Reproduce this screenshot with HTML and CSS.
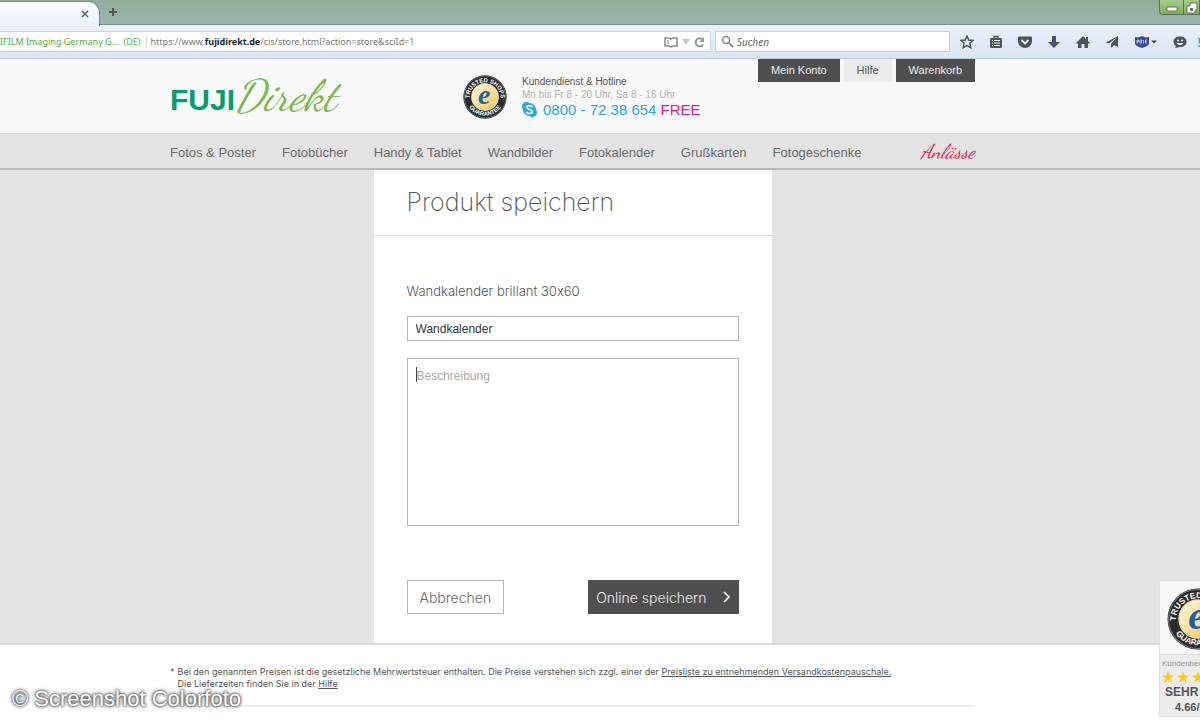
FILE: index.html
```html
<!DOCTYPE html>
<html lang="de">
<head>
  <meta charset="UTF-8">
  <meta name="viewport" content="width=device-width, initial-scale=1.0">
  <title>FUJIDirekt - Produkt speichern</title>
  <link rel="stylesheet" href="styles.css">
</head>
<body>
  <div class="browser">
    <div class="tab-strip">
      <div class="tab"><button class="tab-btn" aria-label="Tab schließen"><svg width="8" height="8" viewBox="0 0 8 8"><path d="M1 1l6 6M7 1L1 7" stroke="#5b6470" stroke-width="1.5"/></svg></button></div>
      <button class="tab-btn new-tab" aria-label="Neuer Tab"><svg width="10" height="10" viewBox="0 0 10 10"><path d="M5 1v8M1 5h8" stroke="#4b5a58" stroke-width="2"/></svg></button>
      <div class="window-buttons">
        <button aria-label="Minimieren"><svg width="12" height="12" viewBox="0 0 12 12"><rect x="1" y="5" width="10" height="4" rx="1" fill="#fff" stroke="#60745c"/></svg></button>
        <button aria-label="Maximieren"><svg width="12" height="12" viewBox="0 0 12 12"><path d="M4 1h7v7H9v3H1V4h3z" fill="#fff" stroke="#60745c"/><path d="M4 6h3v3H4z" fill="#60745c"/></svg></button>
      </div>
    </div>
    <div class="toolbar">
      <div class="url-field">
        <span class="identity">IFILM Imaging Germany G... &nbsp;(DE)</span>
        <div class="url" role="textbox" contenteditable="true" spellcheck="false" aria-label="Adresse">https://www.<b>fujidirekt.de</b>/cis/store.html?action=store&amp;sciId=1</div>
        <svg width="14" height="12" viewBox="0 0 14 12" fill="none" stroke="#878b90" stroke-width="1.5"><path d="M1 2h4.500l1.500 1 1.500-1H13v8H8.500L7 11l-1.500-1H1z"/><path d="M3 5h2M3 7h2" stroke-width="1"/></svg>
        <svg width="8" height="8" viewBox="0 0 8 8"><path d="M0 1h8L4 7z" fill="#b9cad6"/></svg>
        <svg width="11" height="12" viewBox="0 0 11 12"><path d="M9 8.500A4 4 0 1 1 8 3" fill="none" stroke="#8798a6" stroke-width="2"/><path d="M10 1v5H5z" fill="#8798a6"/></svg>
      </div>
      <label class="search-field">
        <svg width="13" height="13" viewBox="0 0 13 13" fill="none" stroke="#85898d"><circle cx="5" cy="5" r="3.500" stroke-width="1.500"/><path d="M8 8l4 4" stroke-width="2"/></svg>
        <input type="text" placeholder="Suchen" aria-label="Suchen">
      </label>
      <div class="tools">
        <button aria-label="Lesezeichen"><svg width="14" height="14" viewBox="0 0 14 14"><path d="M7 1l1.800 4 4.200.5-3.200 2.800 1 4.400L7 10.500l-3.800 2.200 1-4.400L1 5.500 5.200 5z" fill="none" stroke="#4d535a" stroke-width="1.500"/></svg></button>
        <button aria-label="Lesezeichen anzeigen"><svg width="14" height="14" viewBox="0 0 14 14"><path d="M5 3V1.500h4V3" fill="none" stroke="#4d535a" stroke-width="1.500"/><rect x="1" y="3" width="12" height="10" rx="1.500" fill="#4d535a"/><path d="M3 5.500h1M5 5.500h6M3 8h1M5 8h6M3 10.500h1M5 10.500h6" stroke="#eef4fa"/></svg></button>
        <button aria-label="Pocket"><svg width="14" height="14" viewBox="0 0 14 14"><path d="M1 1.500h12a1 1 0 0 1 1 1V6a7 7 0 0 1-14 0V2.500a1 1 0 0 1 1-1z" fill="#4d535a"/><path d="M3.500 5L7 8.500 10.500 5" fill="none" stroke="#eef4fa" stroke-width="1.800"/></svg></button>
        <button aria-label="Downloads"><svg width="14" height="14" viewBox="0 0 14 14"><path d="M5 1h4v6h4l-6 6-6-6h4z" fill="#4d535a"/></svg></button>
        <button aria-label="Startseite"><svg width="14" height="14" viewBox="0 0 14 14"><path d="M7 1l3 3V2h2v4l2 2-1 1-1-1v5H8.500V9h-3v4H2V8L1 9 0 8z" fill="#4d535a"/></svg></button>
        <button aria-label="Senden"><svg width="14" height="14" viewBox="0 0 14 14"><path d="M13 1v11L9 10l-3 3V9l6-7-8 6.500L1 7.500z" fill="#4d535a"/></svg></button>
        <button class="shield" aria-label="Schutz"><svg width="24" height="14" viewBox="0 0 24 14"><path d="M1 2l3 .5L8 1l4 1.500 3-.5v7c-1 2-4 3-7 4-3-1-6-2-7-4z" fill="#3c4c9c"/><path d="M3 8.500V5h1.500v2H3M6 5v3.200h1.500V5zM9.500 8.500V5M13 5h-1.500v3H13M11.500 6.500h1" fill="none" stroke="#d7dcf2" stroke-width=".8"/><path d="M17 5.500h6l-3 3z" fill="#444"/></svg></button>
        <button aria-label="Chat"><svg width="14" height="14" viewBox="0 0 14 14"><path d="M7 1.500c4 0 6.500 2 6.500 5.200S11 12 7 12l-5 1 1-2C1.500 10 .5 8.500.5 6.700.5 3.500 3 1.500 7 1.500z" fill="#4d535a"/><circle cx="5" cy="5.500" r="1" fill="#eef4fa"/><circle cx="9" cy="5.500" r="1" fill="#eef4fa"/><path d="M3.500 8h7c-1 2.500-6 2.500-7 0z" fill="#eef4fa"/></svg></button>
        <button class="twitter" aria-label="Twitter"><svg width="14" height="14" viewBox="0 0 14 14"><path d="M1 2l5 3c0-3 3-4 5-2l3-1-2 4c0 6-7 8-12 5l4-1-3-3 1-1z" fill="#2ca7e0"/></svg></button>
      </div>
    </div>
  </div>

  <header class="header">
    <div class="wrap header-row">
      <a class="logo" href="#">FUJI<span>Direkt</span></a>
      <div class="service">
        <svg class="seal" viewBox="0 0 60 60" role="img" aria-label="Trusted Shops">
          <defs>
            <path id="arc-top" d="M9 36A21.500 21.500 0 1 1 51 36"/>
            <path id="arc-bottom" d="M4 34A26.500 26.500 0 0 0 56 34"/>
            <linearGradient id="gold" x1="0" y1="0" x2="1" y2="1"><stop offset="0" stop-color="#fffbe0"/><stop offset="1" stop-color="#f0c653"/></linearGradient>
          </defs>
          <circle cx="30" cy="30" r="29.500" fill="#2b2b2b"/>
          <circle cx="30" cy="30" r="28.500" fill="none" stroke="#777"/>
          <circle cx="30" cy="30" r="18.500" fill="url(#gold)" stroke="#e3e3e3"/>
          <text class="seal-ring"><textPath href="#arc-top" startOffset="50%">TRUSTED SHOPS</textPath></text>
          <text class="seal-ring"><textPath href="#arc-bottom" startOffset="50%">GUARANTEE</textPath></text>
          <text class="seal-e" x="29" y="40">e</text>
        </svg>
        <div class="hotline">
          <p>Kundendienst &amp; Hotline</p>
          <p class="hours">Mo bis Fr 8 - 20 Uhr, Sa 8 - 16 Uhr</p>
          <p class="phone"><svg width="15" height="15" viewBox="0 0 15 15"><circle cx="4.500" cy="4.500" r="4.500" fill="#27a9e1"/><circle cx="10.500" cy="10.500" r="4.500" fill="#27a9e1"/><circle cx="7.500" cy="7.500" r="6.500" fill="#27a9e1"/><path d="M10.500 5C9 3 4.800 3.300 4.800 5.500s5.600 1.600 5.600 4-4.500 2.700-6 .5" fill="none" stroke="#fff" stroke-width="1.600"/></svg>0800 - 72 38 654 <span>FREE</span></p>
        </div>
      </div>
      <div class="account">
        <a class="dark" href="#">Mein Konto</a>
        <a href="#">Hilfe</a>
        <a class="dark" href="#">Warenkorb</a>
      </div>
    </div>
  </header>

  <nav class="nav">
    <div class="wrap nav-row">
      <a href="#">Fotos &amp; Poster</a>
      <a href="#">Fotobücher</a>
      <a href="#">Handy &amp; Tablet</a>
      <a href="#">Wandbilder</a>
      <a href="#">Fotokalender</a>
      <a href="#">Grußkarten</a>
      <a href="#">Fotogeschenke</a>
      <a class="occasions" href="#">Anlässe</a>
    </div>
  </nav>

  <main class="main">
    <form class="dialog">
      <h1>Produkt speichern</h1>
      <div class="dialog-body">
        <label for="name">Wandkalender brillant 30x60</label>
        <input type="text" id="name" value="Wandkalender">
        <div class="description">
          <textarea aria-label="Beschreibung" placeholder="Beschreibung"></textarea>
          <span class="caret"></span>
        </div>
        <div class="actions">
          <button type="button" class="cancel">Abbrechen</button>
          <button type="button" class="save">Online speichern <svg width="8" height="12" viewBox="0 0 8 12"><path d="M1 1l5 5-5 5" fill="none" stroke="#fff" stroke-width="1.500"/></svg></button>
        </div>
      </div>
    </form>
  </main>

  <footer class="footer">
    <div class="wrap note">
      <span>*</span>
      <p>Bei den genannten Preisen ist die gesetzliche Mehrwertsteuer enthalten. Die Preise verstehen sich zzgl. einer der <a href="#">Preisliste zu entnehmenden Versandkostenpauschale.</a><br>Die Lieferzeiten finden Sie in der <a href="#">Hilfe</a></p>
    </div>
  </footer>

  <div class="credit">© Screenshot Colorfoto</div>

  <!-- Trusted Shops badge, runs off the right edge -->
  <aside class="badge">
    <div class="badge-inner">
      <svg class="seal" viewBox="0 0 60 60" role="img" aria-label="Trusted Shops">
        <circle cx="30" cy="30" r="29.500" fill="#2b2b2b"/>
        <circle cx="30" cy="30" r="28.500" fill="none" stroke="#777"/>
        <circle cx="30" cy="30" r="18.500" fill="url(#gold)" stroke="#e3e3e3"/>
        <text class="seal-ring"><textPath href="#arc-top" startOffset="50%">TRUSTED SHOPS</textPath></text>
        <text class="seal-ring"><textPath href="#arc-bottom" startOffset="50%">GUARANTEE</textPath></text>
        <text class="seal-e" x="29" y="40">e</text>
      </svg>
      <div class="rating">
        <p class="rating-title">Kundenbewertung</p>
        <p class="stars"><span>★</span><span>★</span><span>★</span><span>★</span><span>★</span></p>
        <p class="grade">SEHR GUT</p>
        <p class="score">4.66/5.00</p>
      </div>
    </div>
  </aside>
</body>
</html>
```

FILE: styles.css
```css
* {
  margin: 0;
  padding: 0;
  box-sizing: border-box;
}

body {
  position: relative;
  min-height: 100vh;
  overflow: hidden;
  background-color: #fff;
  color: #555;
  font-family: "Liberation Sans", Arial, sans-serif;
}

a {
  color: inherit;
  text-decoration: none;
}

button {
  font-family: inherit;
  cursor: pointer;
}

/* Browser bar */
.browser {
  font-family: "Noto Sans", sans-serif;
  font-size: 9px;
}

.tab-strip {
  display: flex;
  height: 25px;
  background: linear-gradient(#8fae98, #9bb6ae);
  border-bottom: 1px solid #71928a;
}

.tab {
  display: flex;
  align-items: center;
  justify-content: flex-end;
  width: 100px;
  height: 25px;
  margin-top: 1px;
  padding-right: 10px;
  background: linear-gradient(#fafcff, #eaf1fb);
  border-top: 1px solid #6f8f80;
  border-right: 1px solid #6f8f80;
  border-radius: 0 12px 0 0;
}

.tab-btn {
  display: flex;
  border: none;
  background: none;
}

.new-tab {
  align-self: center;
  margin-left: 8px;
}

.window-buttons {
  display: flex;
  height: 15px;
  margin-left: auto;
  border: 1px solid #58754f;
  border-top: none;
  border-radius: 0 0 0 4px;
  background: linear-gradient(#a5ca8e, #7caf5e);
}

.window-buttons button {
  width: 24px;
  border: none;
  border-right: 1px solid #58754f;
  background: none;
}

.window-buttons button + button {
  width: 15px;
  border-right: none;
}

.toolbar {
  display: flex;
  align-items: center;
  height: 34px;
  gap: 4px;
  background: linear-gradient(#eaf1fb, #d9e6f3);
  border-bottom: 1px solid #bccedd;
}

.url-field {
  display: flex;
  flex: 1;
  align-items: center;
  gap: 4px;
  height: 21px;
  padding-right: 5px;
  background-color: #fff;
  border: 1px solid #c3d5e5;
  border-left: none;
  white-space: nowrap;
}

.identity {
  padding-right: 5px;
  border-right: 1px solid #ddd;
  color: #4db14a;
}

.url {
  flex: 1;
  outline: none;
  color: #777;
}

.url b {
  color: #222;
}

.search-field {
  display: flex;
  align-items: center;
  gap: 3px;
  width: 235px;
  height: 21px;
  padding-left: 5px;
  background-color: #fff;
  border: 1px solid #c3d5e5;
}

.search-field input {
  flex: 1;
  border: none;
  outline: none;
  font: italic 10px "Noto Sans", sans-serif;
}

.search-field input::placeholder {
  color: #666;
}

.tools {
  display: flex;
  gap: 15px;
  width: 246px;
  padding-left: 6px;
}

.tools button {
  display: flex;
  flex: none;
  width: 14px;
  border: none;
  background: none;
}

.tools .shield {
  width: 24px;
}

.tools .twitter {
  margin-left: -5px;
}

.tools svg {
  flex: none;
}

/* Header */
.header,
.nav,
.main,
.footer {
  padding-right: 55px;
}

.wrap {
  max-width: 805px;
  margin: 0 auto;
}

.header {
  background-color: #f8f8f8;
}

.header-row {
  display: grid;
  grid-template-columns: 293px 1fr auto;
  height: 74px;
}

.logo {
  align-self: center;
  padding-top: 4px;
  color: #00a06a;
  font-size: 30px;
  font-weight: bold;
  line-height: 50px;
}

.logo span {
  color: #7cb84c;
  font-family: "Dancing Script", "Segoe Script", cursive;
  font-size: 44px;
  font-style: italic;
  font-weight: 300;
}

.service {
  display: flex;
  gap: 15px;
  padding-top: 16px;
}

.seal {
  flex: none;
  width: 44px;
  height: 44px;
}

.seal-ring {
  fill: #fff;
  font-size: 8px;
  font-weight: bold;
  text-anchor: middle;
}

.seal-e {
  fill: #1d5fa6;
  font-family: "Liberation Serif", serif;
  font-size: 38px;
  font-style: italic;
  font-weight: bold;
  text-anchor: middle;
}

.hotline {
  font-size: 10px;
  line-height: 13px;
  white-space: nowrap;
}

.hotline .hours {
  color: #b5b5b5;
}

.hotline .phone {
  color: #2da5dc;
  font-size: 15px;
  line-height: 18px;
}

.phone svg {
  margin-right: 6px;
  vertical-align: -2px;
}

.phone span {
  color: #e5178a;
}

.account {
  display: flex;
  align-items: flex-start;
  gap: 4px;
  font-size: 11px;
  line-height: 23px;
}

.account a {
  padding: 0 13px;
  background-color: #ececec;
}

.account .dark {
  background-color: #4f4f4f;
  color: #eee;
}

/* Navigation */
.nav {
  background-color: #e3e3e3;
  border-top: 1px solid #d8d8d8;
  border-bottom: 2px solid #b9b9b9;
}

.nav-row {
  display: flex;
  align-items: center;
  gap: 26px;
  height: 34px;
  padding-top: 2px;
  color: #6a6a6a;
  font-size: 13px;
  white-space: nowrap;
}

.nav-row .occasions {
  margin-left: auto;
  color: #e0234e;
  font-family: "Dancing Script", "Segoe Script", cursive;
  font-size: 20px;
  font-style: italic;
}

/* Save dialog */
.main {
  background-color: #e4e4e4;
  border-bottom: 2px solid #dadada;
}

.dialog {
  max-width: 398px;
  margin: 0 auto;
  background-color: #fff;
  font-family: Inter, sans-serif;
  font-variant-ligatures: no-contextual;
}

.dialog h1 {
  padding: 0 33px;
  border-bottom: 1px solid #dedede;
  font-size: 25px;
  font-weight: 200;
  line-height: 65px;
}

.dialog-body {
  padding: 45px 33px 29px;
}

.dialog label {
  display: block;
  margin-bottom: 15px;
  font-size: 13px;
  font-weight: 300;
  line-height: 20px;
}

.dialog input,
.dialog textarea {
  display: block;
  width: 100%;
  border: 1px solid #b4b4b4;
  outline: none;
  background-color: #fff;
  color: #333;
  font-family: "Liberation Sans", Arial, sans-serif;
  font-size: 12px;
}

.dialog input {
  height: 25px;
  padding: 1px 8px 0;
}

.description {
  position: relative;
  margin-top: 17px;
}

.dialog textarea {
  height: 168px;
  padding: 10px 9px;
  resize: none;
}

.dialog textarea::placeholder {
  color: #aaa;
}

.caret {
  position: absolute;
  top: 9px;
  left: 9px;
  width: 1px;
  height: 15px;
  background-color: #444;
}

.actions {
  display: flex;
  justify-content: space-between;
  margin-top: 54px;
}

.actions button {
  height: 34px;
  font-size: 14px;
  font-weight: 300;
}

.cancel {
  padding: 0 12px;
  border: 1px solid #b4b4b4;
  background-color: #fff;
  color: #666;
}

.save {
  display: flex;
  align-items: center;
  gap: 16px;
  padding: 0 8px;
  border: none;
  background-color: #4f4f4f;
  color: #eee;
}

/* Footer */
.note {
  display: flex;
  gap: 3px;
  padding: 21px 0 15px;
  border-bottom: 2px solid #ececec;
  font-family: Inter, sans-serif;
  font-size: 9px;
  line-height: 12px;
}

.note a {
  text-decoration: underline;
}

.credit {
  position: absolute;
  left: 12px;
  bottom: 9px;
  color: #fff;
  font-size: 22px;
  line-height: 24px;
  text-shadow: 0 0 2px #444, 0 0 3px #555, 0 0 4px #666;
}

/* Rating badge */
.badge {
  position: absolute;
  right: 0;
  bottom: 3px;
  width: 41px;
  overflow: hidden;
  border: 1px solid #e0e0e0;
  border-right: none;
  background-color: #f7f7f7;
}

.badge-inner {
  width: 80px;
}

.badge .seal {
  display: block;
  width: 62px;
  height: 62px;
  margin: 7px 7px 4px;
}

.rating {
  padding: 3px 2px 2px;
  border-top: 1px solid #ddd;
  background-color: #ececec;
  color: #555;
  font-weight: bold;
  white-space: nowrap;
}

.rating-title {
  color: #999;
  font-size: 8px;
  font-weight: normal;
  line-height: 12px;
}

.stars {
  display: flex;
  gap: 2px;
  color: #ffc90e;
  font-size: 14px;
  line-height: 15px;
}

.grade {
  padding-left: 3px;
  font-size: 12px;
  line-height: 15px;
}

.score {
  padding-left: 13px;
  font-size: 11px;
  line-height: 14px;
}
```
